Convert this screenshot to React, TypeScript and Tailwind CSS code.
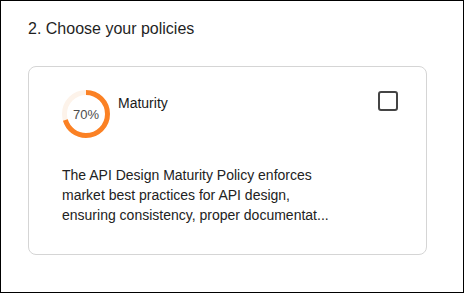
import React from "react";

function ProgressRing({ value }: { value: number }) {
    const size = 48;
    const stroke = 5;
    const r = (size - stroke) / 2;
    const c = 2 * Math.PI * r;

    return (
        <div className="relative w-[48px] h-[48px] shrink-0">
            <svg width={size} height={size} className="-rotate-90">
                <circle cx={size / 2} cy={size / 2} r={r} fill="none" stroke="#fdf3ea" strokeWidth={stroke} />
                <circle
                    cx={size / 2}
                    cy={size / 2}
                    r={r}
                    fill="none"
                    stroke="#fb8124"
                    strokeWidth={stroke}
                    strokeDasharray={c}
                    strokeDashoffset={c * (1 - value / 100)}
                />
            </svg>
            <span className="absolute inset-0 flex items-center justify-center text-[13px] text-[#4d4d4d] pt-[1px]">
                {value}%
            </span>
        </div>
    );
}

export default function App() {
    return (
        <div
            className="w-[464px] h-[293px] border border-black bg-white pl-[27px] pt-[16px]"
            style={{ fontFamily: '"Liberation Sans", Arial, sans-serif' }}
        >
            {/* 見出し */}
            <h2 className="text-[16px] leading-6 text-[#1f1f1f]">2. Choose your policies</h2>

            {/* ポリシーカード */}
            <div className="mt-[25px] w-[399px] h-[189px] border border-[#d5d5d5] rounded-lg pl-[33px] pr-[28px] pt-[23px]">
                <div className="flex items-start">
                    <ProgressRing value={70} />
                    <p className="ml-[8px] mt-[3px] text-[14px] leading-5 text-[#1a1a1a]">Maturity</p>
                    <div className="ml-auto mt-[1px] w-5 h-5 border-2 border-[#444] rounded-[3px]" />
                </div>
                <p className="mt-[27px] w-[280px] text-[14px] leading-5 text-[#222]">
                    The API Design Maturity Policy enforces market best practices for API design, ensuring consistency, proper documentat...
                </p>
            </div>
        </div>
    );
}
